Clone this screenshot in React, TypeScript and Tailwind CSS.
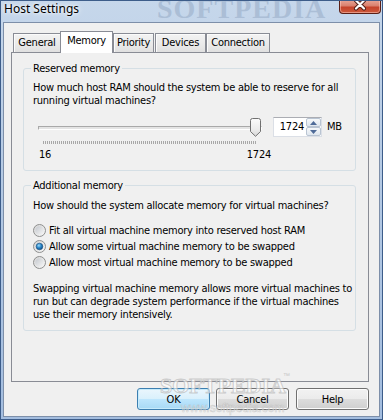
import React from "react";

function Radio({ checked }: { checked?: boolean }) {
  return (
    <svg width="13" height="13" viewBox="0 0 13 13" className="shrink-0">
      <defs>
        <linearGradient id="rOuter" x1="0" y1="0" x2="1" y2="1">
          <stop offset="0" stopColor="#d4d4d4" />
          <stop offset="1" stopColor="#f8f8f8" />
        </linearGradient>
        <linearGradient id="rInner" x1="0" y1="0" x2="1" y2="1">
          <stop offset="0" stopColor="#c4c8ce" />
          <stop offset="1" stopColor="#f6f6f6" />
        </linearGradient>
        <radialGradient id="rDot" cx="0.4" cy="0.35" r="0.7">
          <stop offset="0" stopColor="#9cdcfb" />
          <stop offset="0.5" stopColor="#2a86c8" />
          <stop offset="1" stopColor="#0d4a82" />
        </radialGradient>
      </defs>
      <circle cx="6.5" cy="6.5" r="6" fill="url(#rOuter)" stroke="#8e8f8f" />
      <circle cx="6.5" cy="6.5" r="4.2" fill="url(#rInner)" />
      {checked && (
        <circle cx="6.5" cy="6.5" r="3.3" fill="url(#rDot)" stroke="#1a4f80" strokeWidth="0.6" />
      )}
    </svg>
  );
}

function Thumb() {
  return (
    <svg width="11" height="19" viewBox="0 0 11 19">
      <defs>
        <linearGradient id="thumbG" x1="0" y1="0" x2="0" y2="1">
          <stop offset="0" stopColor="#fbfbfb" />
          <stop offset="0.6" stopColor="#ececec" />
          <stop offset="1" stopColor="#d6d6d6" />
        </linearGradient>
      </defs>
      <path
        d="M0.5 2.5 Q0.5 0.5 2.5 0.5 H8.5 Q10.5 0.5 10.5 2.5 V13.5 L5.5 18.3 L0.5 13.5 Z"
        fill="url(#thumbG)"
        stroke="#707070"
      />
    </svg>
  );
}

function Tab({ label, w, selected }: { label: string; w: string; selected?: boolean }) {
  if (selected) {
    return (
      <div
        className={`relative z-10 -ml-px -mb-px h-[22px] ${w} border border-b-0 border-[#898c95] bg-white flex justify-center pt-[2px]`}
      >
        {label}
      </div>
    );
  }
  return (
    <div
      className={`h-[19px] ${w} border border-b-0 border-[#898c95] bg-[linear-gradient(180deg,#f3f3f3_0%,#e9e9e9_60%,#e0e0e0_100%)] shadow-[inset_1px_1px_0_#fbfbfb] flex justify-center pt-[2px]`}
    >
      {label}
    </div>
  );
}

export default function App() {
  return (
    <div className="relative w-[383px] h-[420px] overflow-hidden border border-[#3d5d8a] bg-[linear-gradient(180deg,#c6d7eb_0%,#b5cae4_40%,#a3bddf_100%)] flex flex-col font-['DejaVu_Sans_Condensed','Liberation_Sans',sans-serif] text-[11px] leading-[13px] tracking-[-0.25px] text-black">
      {/* title watermark */}
      <span className="pointer-events-none select-none absolute left-[156px] top-[-6px] font-['Liberation_Serif',serif] font-bold text-[28px] leading-none tracking-[1px] text-[#abbed6]">
        SOFTPEDIA
      </span>

      {/* title bar */}
      <div className="relative h-[21px] shrink-0 pl-[3px] tracking-normal">
        <span className="font-['Noto_Sans',sans-serif] text-[12px] leading-[16px] [text-shadow:0_0_6px_#fff,0_0_3px_#fff]">
          Host Settings
        </span>
      </div>

      {/* close button */}
      <div className="absolute top-[-1px] right-[1px] w-[42px] h-[14px] rounded-b-[4px] border border-t-0 border-[#5a1f16] bg-[linear-gradient(180deg,#e8a597_0%,#d9806d_45%,#c5432b_55%,#cc5a3c_100%)] shadow-[inset_0_0_0_1px_rgba(255,210,200,0.5)]">
        <svg width="40" height="13" viewBox="0 0 40 13" className="absolute left-0 top-0">
          <path d="M16 0.5 L24 8.5 M24 0.5 L16 8.5" stroke="#4a1a12" strokeWidth="4" strokeLinecap="round" />
          <path d="M16 0.5 L24 8.5 M24 0.5 L16 8.5" stroke="#ffffff" strokeWidth="2.2" strokeLinecap="round" />
        </svg>
      </div>

      {/* client area */}
      <div className="mx-[2px] h-[395px] border border-[#7d8fa9] bg-[#f0f0f0] flex flex-col pt-[8px] px-[7px]">
        {/* tabs */}
        <div className="flex items-end h-[21px] pl-[2px]">
          <Tab label="General" w="w-[48px]" />
          <Tab label="Memory" w="w-[53px]" selected />
          <Tab label="Priority" w="w-[41px]" />
          <div className="ml-px">
            <Tab label="Devices" w="w-[51px]" />
          </div>
          <Tab label="Connection" w="w-[64px]" />
        </div>

        {/* panel */}
        <div className="w-[358px] h-[330px] border border-[#898c95] bg-[#f0f0f0] pt-[15px] pl-[11px]">
          {/* Reserved memory */}
          <div className="relative w-[333px] h-[103px] border border-[#d5dfe5] rounded-[3px] pl-[9px] pt-[12px]">
            <span className="absolute left-[7px] top-[-7px] px-[2px] bg-[#f0f0f0]">Reserved memory</span>
            <p className="whitespace-nowrap">
              How much host RAM should the system be able to reserve for all
              <br />
              running virtual machines?
            </p>
            <div className="flex items-start mt-[10px]">
              <div className="ml-[5px] w-[224px] flex flex-col">
                <div className="relative h-[20px]">
                  <div className="mt-[9px] h-[4px] w-full border border-[#a9a9a9] border-b-white border-r-white bg-[#e4e4e4]" />
                  <div className="absolute left-[212px] top-[1px]">
                    <Thumb />
                  </div>
                </div>
                <div className="mt-[4px] ml-[5px] w-[214px] h-[3px] bg-[image:repeating-linear-gradient(90deg,#a8a8a8_0px,#a8a8a8_1px,transparent_1px,transparent_2px)]" />
                <div className="mt-[4px] ml-[1px] w-[232px] flex justify-between">
                  <span>16</span>
                  <span>1724</span>
                </div>
              </div>
              <div className="ml-[11px] flex h-[20px] w-[49px] border border-[#dbdfe6] border-t-[#abadb3] bg-white">
                <div className="flex-1 text-right pr-[2px] leading-[18px]">1724</div>
                <div className="w-[15px] flex flex-col">
                  <div className="h-[9px] border border-[#b9c4d2] rounded-[2px] bg-[linear-gradient(180deg,#f6f8fa,#dfe6ee)] flex items-center justify-center">
                    <svg width="7" height="4" viewBox="0 0 7 4">
                      <path d="M0 4 L3.5 0 L7 4 Z" fill="#4f6b98" />
                    </svg>
                  </div>
                  <div className="h-[9px] border border-[#b9c4d2] rounded-[2px] bg-[linear-gradient(180deg,#f6f8fa,#dfe6ee)] flex items-center justify-center">
                    <svg width="7" height="4" viewBox="0 0 7 4">
                      <path d="M0 0 L7 0 L3.5 4 Z" fill="#4f6b98" />
                    </svg>
                  </div>
                </div>
              </div>
              <span className="ml-[5px] leading-[20px]">MB</span>
            </div>
          </div>

          {/* Additional memory */}
          <div className="relative mt-[14px] w-[333px] h-[146px] border border-[#d5dfe5] rounded-[3px] pl-[9px] pt-[13px]">
            <span className="absolute left-[7px] top-[-7px] px-[2px] bg-[#f0f0f0]">Additional memory</span>
            <p className="whitespace-nowrap">How should the system allocate memory for virtual machines?</p>
            <div className="mt-[10px] flex flex-col">
              <label className="h-[16px] flex items-center gap-[3px] whitespace-nowrap">
                <Radio />
                <span>Fit all virtual machine memory into reserved host RAM</span>
              </label>
              <label className="h-[16px] flex items-center gap-[3px] whitespace-nowrap">
                <Radio checked />
                <span>Allow some virtual machine memory to be swapped</span>
              </label>
              <label className="h-[16px] flex items-center gap-[3px] whitespace-nowrap">
                <Radio />
                <span>Allow most virtual machine memory to be swapped</span>
              </label>
            </div>
            <p className="mt-[12px] whitespace-nowrap">
              Swapping virtual machine memory allows more virtual machines to
              <br />
              run but can degrade system performance if the virtual machines
              <br />
              use their memory intensively.
            </p>
          </div>
        </div>

        {/* buttons */}
        <div className="mt-[6px] w-[358px] flex justify-end">
          <button className="mr-[6px] w-[73px] h-[22px] rounded-[3px] border border-[#3c7fb1] bg-[linear-gradient(180deg,#eaf6fd_0%,#d9f0fc_50%,#bee6fd_50%,#a7d9f5_100%)] shadow-[inset_0_0_0_1px_#c6ebfc]">
            OK
          </button>
          <button className="mr-[7px] w-[73px] h-[22px] rounded-[3px] border border-[#707070] bg-[linear-gradient(180deg,#f2f2f2_0%,#ebebeb_50%,#dddddd_50%,#cfcfcf_100%)] shadow-[inset_0_0_0_1px_#fcfcfc]">
            Cancel
          </button>
          <button className="w-[73px] h-[22px] rounded-[3px] border border-[#707070] bg-[linear-gradient(180deg,#f2f2f2_0%,#ebebeb_50%,#dddddd_50%,#cfcfcf_100%)] shadow-[inset_0_0_0_1px_#fcfcfc]">
            Help
          </button>
        </div>
      </div>

      {/* bottom watermark */}
      <span className="pointer-events-none select-none absolute left-[159px] top-[374px] font-['Liberation_Serif',serif] font-bold text-[22px] leading-none tracking-normal text-white/60 [-webkit-text-stroke:1px_rgba(170,170,170,0.55)]">
        SOFTPEDIA
      </span>
      <span className="pointer-events-none select-none absolute left-[282px] top-[371px] font-['Liberation_Sans',sans-serif] text-[7px] leading-none text-[#c8c8c8]">
        ™
      </span>
      <span className="pointer-events-none select-none absolute left-[180px] top-[401px] font-['Liberation_Sans',sans-serif] text-[12px] leading-none tracking-normal text-white/50 [-webkit-text-stroke:0.6px_rgba(170,170,170,0.5)]">
        www.softpedia.com
      </span>
    </div>
  );
}
